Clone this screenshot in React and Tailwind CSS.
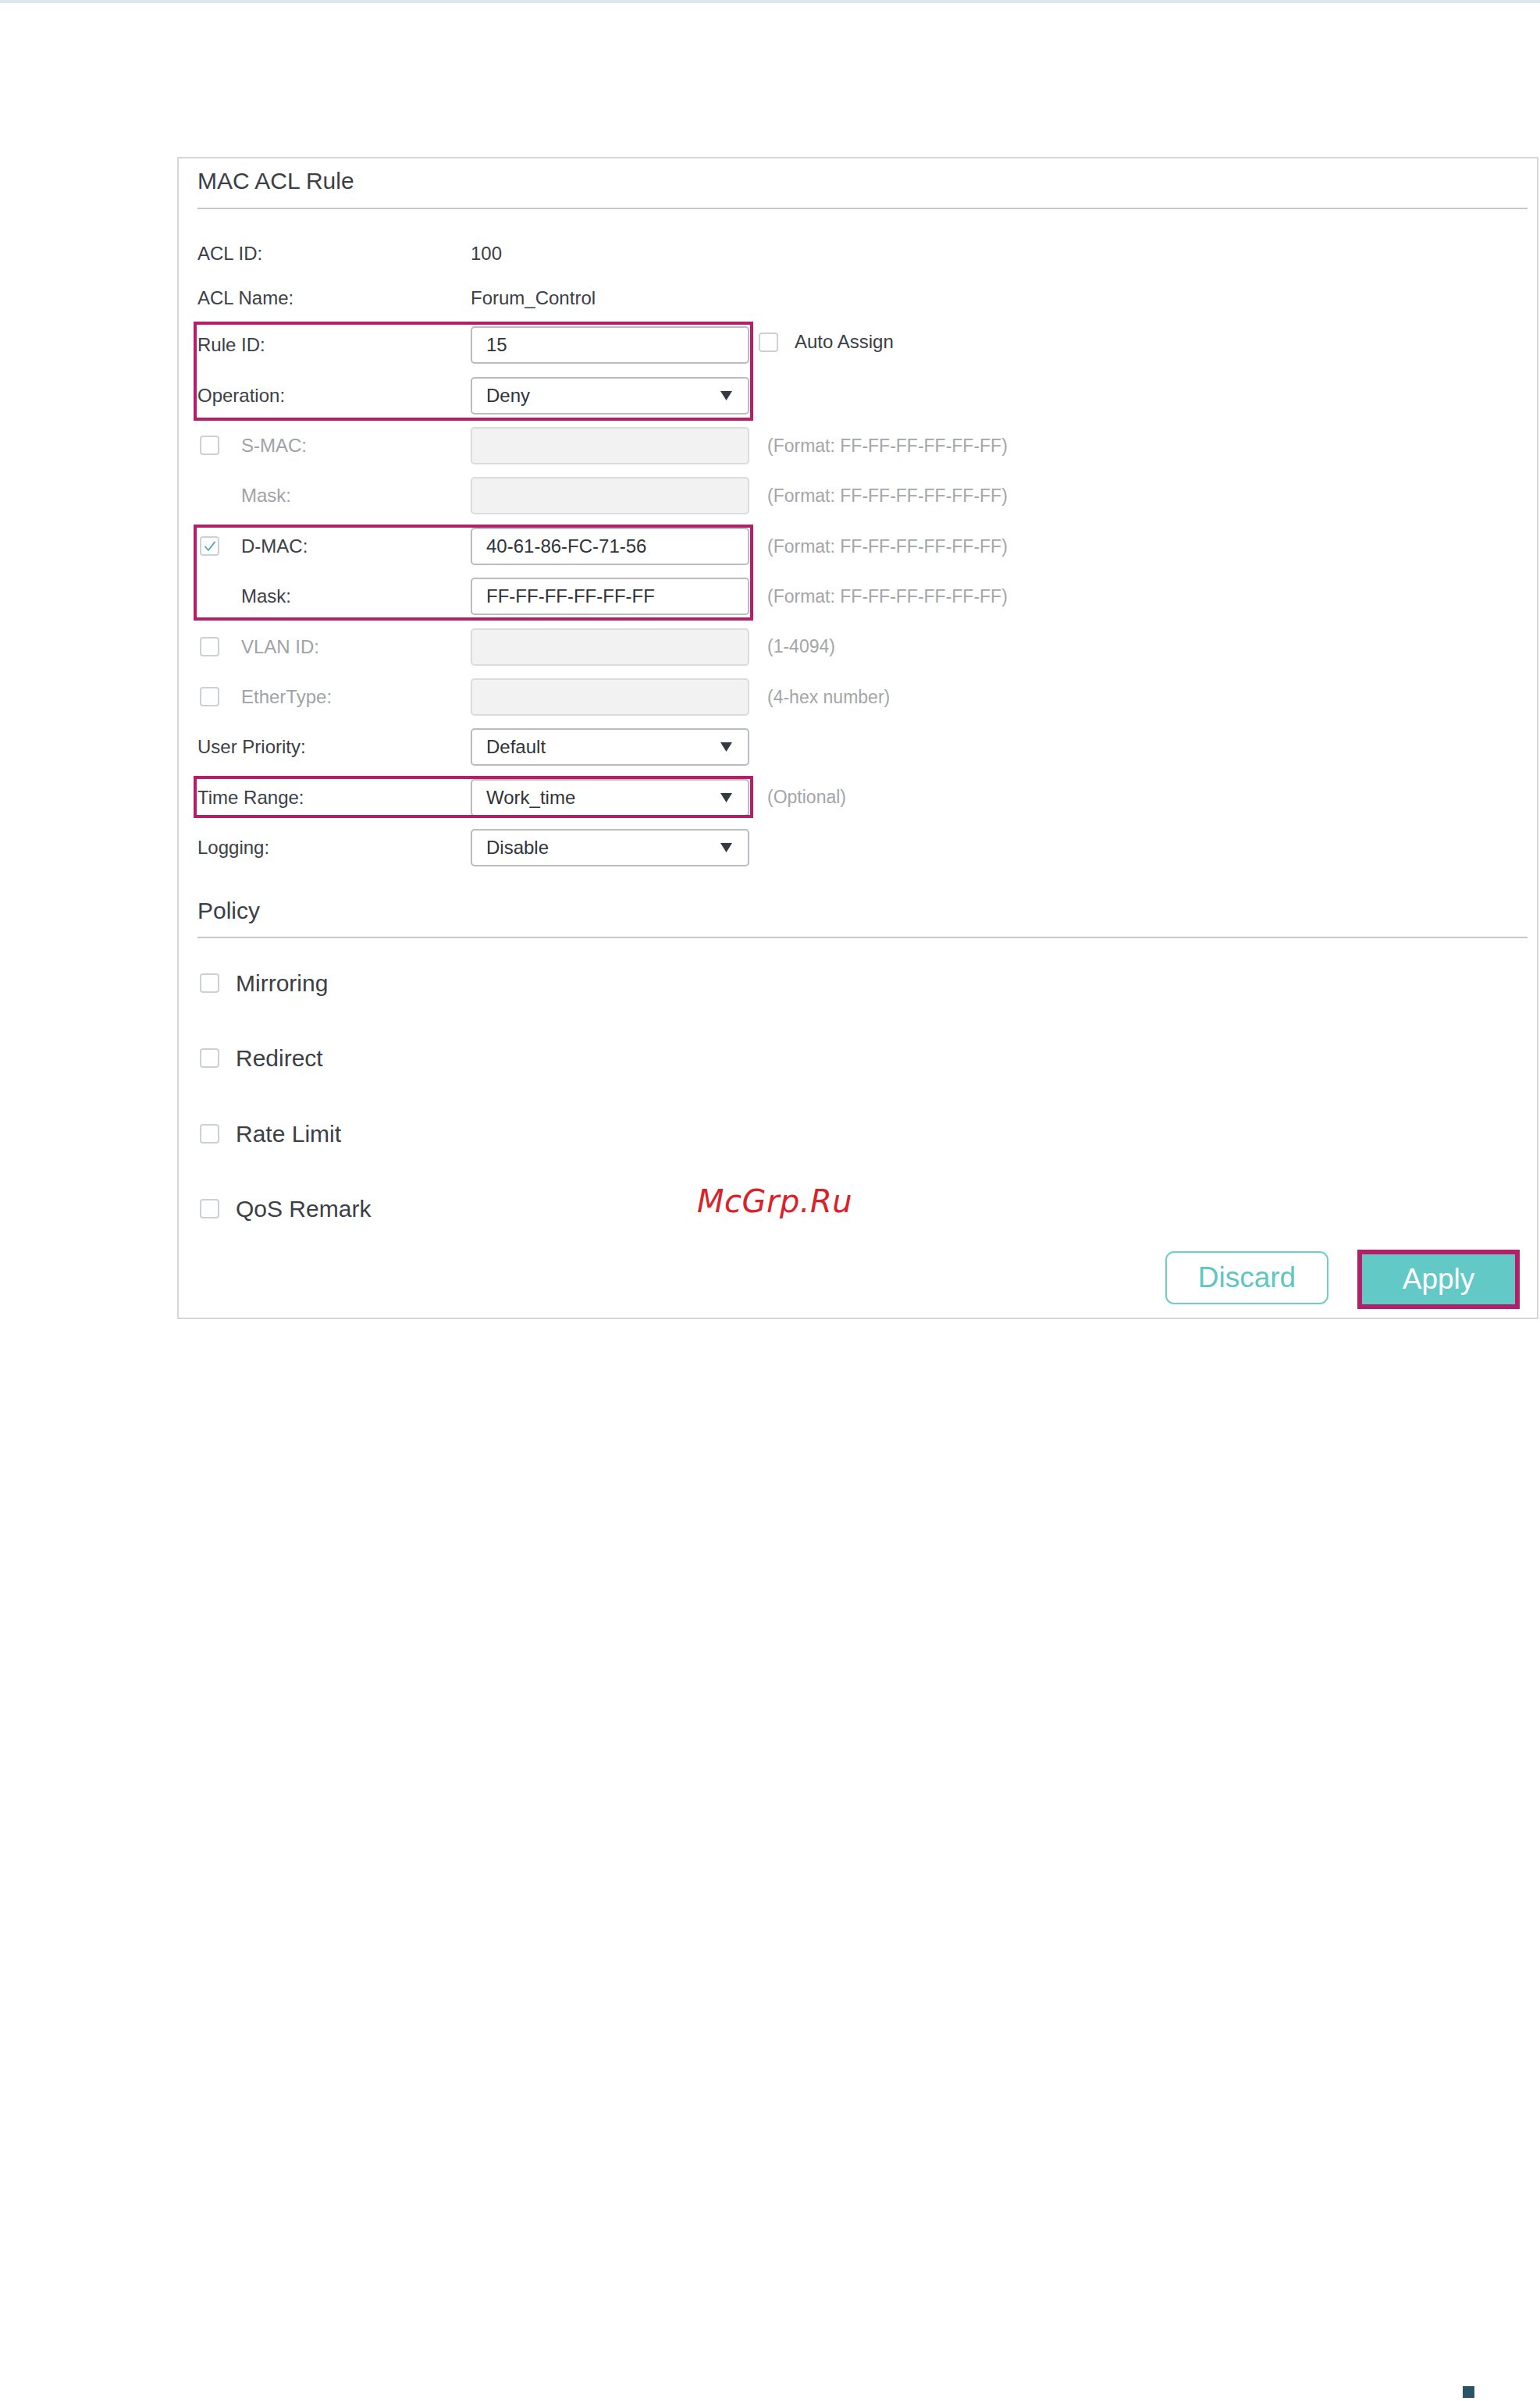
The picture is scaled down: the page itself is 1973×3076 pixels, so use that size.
import React from 'react';

const FONT = "font-['Liberation_Sans',Arial,sans-serif]";

function Checkbox({ checked }) {
  return (
    <div className="w-[25px] h-[25px] shrink-0 rounded-[4px] border-2 border-[#cdd0d4] bg-white flex items-center justify-center">
      {checked && (
        <svg width="18" height="18" viewBox="0 0 18 18" fill="none">
          <path d="M3 9.5 L7 14 L15 3.5" stroke="#4fa3bf" strokeWidth="1.8" strokeLinecap="round" strokeLinejoin="round" />
        </svg>
      )}
    </div>
  );
}

function Field({ value, disabled, select }) {
  return (
    <div
      className={`w-[357px] h-[48px] shrink-0 rounded-[5px] border-2 flex items-center justify-between pl-[18px] pr-[20px] text-[24px] ${
        disabled ? 'bg-[#f2f2f2] border-[#dcdcdc]' : 'bg-white border-[#b9bcc0] text-[#2f343a]'
      }`}
    >
      <span>{value}</span>
      {select && (
        <svg width="15" height="12" viewBox="0 0 15 12">
          <path d="M0 0 H15 L7.5 12 Z" fill="#333a42" />
        </svg>
      )}
    </div>
  );
}

function Row({ label, check, checked, muted, indent, children, hint, h = 'h-[64.4px]' }) {
  return (
    <div className={`flex items-center ${h}`}>
      <div className="w-[350px] shrink-0 flex items-center">
        {check && (
          <div className="ml-[3px]">
            <Checkbox checked={checked} />
          </div>
        )}
        <span
          className={`text-[24px] leading-[28px] ${check ? 'ml-[28px]' : indent ? 'ml-[56px]' : ''} ${
            muted ? 'text-[#a0a3a6]' : 'text-[#3b4046]'
          }`}
        >
          {label}
        </span>
      </div>
      {children}
      {hint && <span className="ml-[23px] text-[23px] text-[#a3a6a9]">{hint}</span>}
    </div>
  );
}

function Highlight({ children, top, bottom }) {
  return (
    <div className="relative">
      {children}
      <div
        className={`absolute -left-[5px] w-[717px] border-4 border-[#b41f6a] pointer-events-none ${top} ${bottom}`}
      />
    </div>
  );
}

export default function App() {
  const fmt = '(Format: FF-FF-FF-FF-FF-FF)';
  const policies = ['Mirroring', 'Redirect', 'Rate Limit', 'QoS Remark'];

  return (
    <div className={`relative min-h-[3076px] bg-white ${FONT}`}>
      <div className="h-[4px] bg-[#dae6ec]" />

      <div className="pt-[197px] pl-[227px] pr-[2px]">
        <div className="border-2 border-[#d6d6d6] pl-[24px] pr-[12px] pb-[11px]">
          {/* Header */}
          <div className="pt-[12px] pb-[17px] text-[30px] leading-[34px] text-[#3b4046]">MAC ACL Rule</div>
          <div className="h-[2px] bg-[#c4c8cc]" />

          {/* Form */}
          <div className="mt-[28px]">
            <Row label="ACL ID:" h="h-[57px]">
              <span className="text-[24px] text-[#3b4046]">100</span>
            </Row>
            <Row label="ACL Name:" h="h-[57px]">
              <span className="text-[24px] text-[#3b4046]">Forum_Control</span>
            </Row>

            <Highlight top="top-[1.5px]" bottom="bottom-0">
              <Row label="Rule ID:">
                <Field value="15" />
                <div className="ml-[12px] mb-[8px] flex items-center">
                  <Checkbox />
                  <span className="ml-[21px] text-[24px] text-[#3b4046]">Auto Assign</span>
                </div>
              </Row>
              <Row label="Operation:">
                <Field value="Deny" select />
              </Row>
            </Highlight>

            <Row label="S-MAC:" check muted hint={fmt}>
              <Field disabled />
            </Row>
            <Row label="Mask:" indent muted hint={fmt}>
              <Field disabled />
            </Row>

            <Highlight top="top-[4px]" bottom="bottom-[1px]">
              <Row label="D-MAC:" check checked hint={fmt}>
                <Field value="40-61-86-FC-71-56" />
              </Row>
              <Row label="Mask:" indent hint={fmt}>
                <Field value="FF-FF-FF-FF-FF-FF" />
              </Row>
            </Highlight>

            <Row label="VLAN ID:" check muted hint="(1-4094)">
              <Field disabled />
            </Row>
            <Row label="EtherType:" check muted hint="(4-hex number)">
              <Field disabled />
            </Row>
            <Row label="User Priority:">
              <Field value="Default" select />
            </Row>

            <Highlight top="top-[4px]" bottom="bottom-[6px]">
              <Row label="Time Range:" hint="(Optional)">
                <Field value="Work_time" select />
              </Row>
            </Highlight>

            <Row label="Logging:">
              <Field value="Disable" select />
            </Row>
          </div>

          {/* Policy */}
          <div className="mt-[32px] mb-[16px] text-[30px] leading-[34px] text-[#3b4046]">Policy</div>
          <div className="h-[2px] bg-[#c4c8cc]" />

          <div className="mt-[9px]">
            {policies.map((p) => (
              <div key={p} className="h-[96.4px] flex items-center">
                <div className="ml-[3px]">
                  <Checkbox />
                </div>
                <span className="ml-[21px] text-[30px] text-[#3b4046]">{p}</span>
              </div>
            ))}
          </div>

          {/* Actions */}
          <div className="mt-[4px] mr-[10px] flex justify-end items-start gap-[37px]">
            <button className="mt-[2px] w-[209px] h-[68px] rounded-[11px] border-2 border-[#6ccfcb] bg-white text-[37px] text-[#5ec7c3]">
              Discard
            </button>
            <div className="w-[208px] h-[76px] border-[6px] border-[#b41f6a]">
              <button className="w-full h-full bg-[#62c9c7] text-[37px] text-white">Apply</button>
            </div>
          </div>
        </div>
      </div>

      {/* watermark */}
      <div className="absolute left-[893px] top-[1519px] text-[40px] leading-none italic tracking-[0.5px] text-[#d8232a] font-['DejaVu_Sans',sans-serif]">
        McGrp.Ru
      </div>

      {/* page marker */}
      <div className="absolute left-[1874px] top-[3057px] w-[15px] h-[15px] bg-[#2b5468]" />
    </div>
  );
}
